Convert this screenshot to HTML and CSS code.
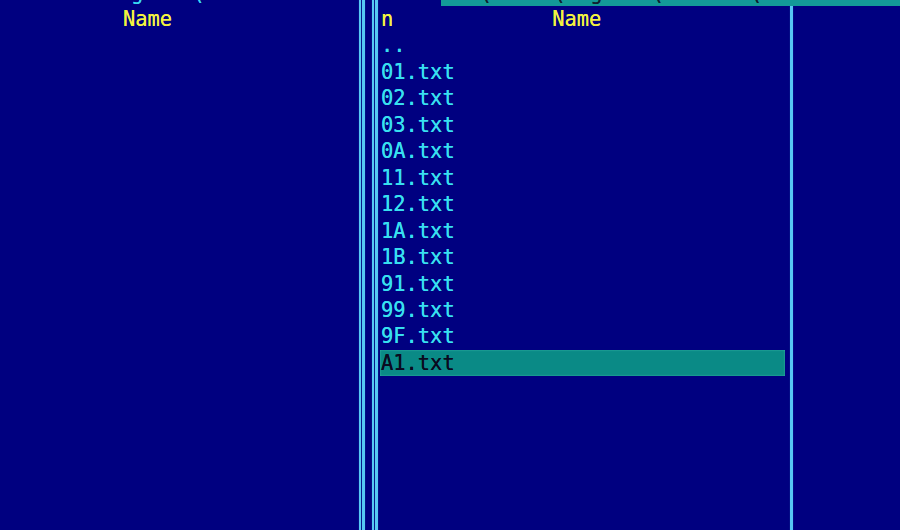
FILE: index.html
```html
<!DOCTYPE html>
<html>
<head>
<meta charset="utf-8">
<link rel="stylesheet" href="styles.css">
</head>
<body>
<div class="screen">
  <div class="panel left">
    <div class="row title-left">g    (</div>
    <div class="row head head-left">Name</div>
  </div>
  <div class="divider">
    <div class="dbl"><span></span><span></span></div>
    <div class="dbl second"><span></span><span></span></div>
  </div>
  <div class="panel right">
    <div class="row title-right"><span class="title-bar">   (     (  g    (       (</span></div>
    <div class="cols">
      <div class="col files">
        <div class="row head">n<span class="head-name">Name</span></div>
        <div class="row">..</div>
        <div class="row">01.txt</div>
        <div class="row">02.txt</div>
        <div class="row">03.txt</div>
        <div class="row">0A.txt</div>
        <div class="row">11.txt</div>
        <div class="row">12.txt</div>
        <div class="row">1A.txt</div>
        <div class="row">1B.txt</div>
        <div class="row">91.txt</div>
        <div class="row">99.txt</div>
        <div class="row">9F.txt</div>
        <div class="row selected">A1.txt</div>
      </div>
      <div class="vline"></div>
      <div class="col rest"></div>
    </div>
  </div>
</div>
</body>
</html>
```

FILE: styles.css
```css
html, body {
  margin: 0;
  padding: 0;
  background: #000080;
  overflow: hidden;
}

.screen {
  display: flex;
  width: 900px;
  height: 560px;
  margin-top: -20.46px;
  background: #000080;
  font-family: "DejaVu Sans Mono", "Liberation Mono", monospace;
  font-size: 20.4px;
  color: #38e0f0;
  text-shadow: 0 0 0.6px currentColor;
}

.row {
  height: 26.46px;
  line-height: 26.46px;
  white-space: pre;
}

.panel.left {
  width: 359px;
  flex: none;
}

.title-left {
  padding-left: 131px;
  color: #38d8f0;
}

.head {
  color: #f2f240;
}

.head-left {
  padding-left: 123px;
}

.divider {
  flex: none;
  width: 21px;
  display: flex;
  gap: 7px;
  padding-top: 20.46px;
}

.dbl {
  display: flex;
  gap: 1px;
  width: 6px;
}

.dbl span {
  display: block;
  background: #56c8f4;
  box-shadow: 0 0 1px #2a80c0;
}

.dbl span:first-child {
  width: 2px;
}

.dbl span:last-child {
  width: 3px;
}

.panel.right {
  flex: 1;
  display: flex;
  flex-direction: column;
}

.title-right {
  padding-left: 61px;
}

.title-bar {
  display: block;
  height: 100%;
  background: #139a98;
  color: #102030;
  padding-left: 2px;
}

.cols {
  flex: 1;
  display: flex;
}

.col.files {
  width: 410px;
  flex: none;
  padding-left: 1px;
  box-sizing: border-box;
}

.head-name {
  padding-left: 159px;
}

.selected {
  background: #0a8a86;
  color: #0a0a20;
  margin-left: -1px;
  padding-left: 1px;
  margin-right: 5px;
  box-shadow: inset 0 0 2px #40c0b0;
}

.vline {
  width: 3px;
  flex: none;
  background: #56c8f4;
  box-shadow: 0 0 1px #2a80c0;
}

.col.rest {
  flex: 1;
}
```
